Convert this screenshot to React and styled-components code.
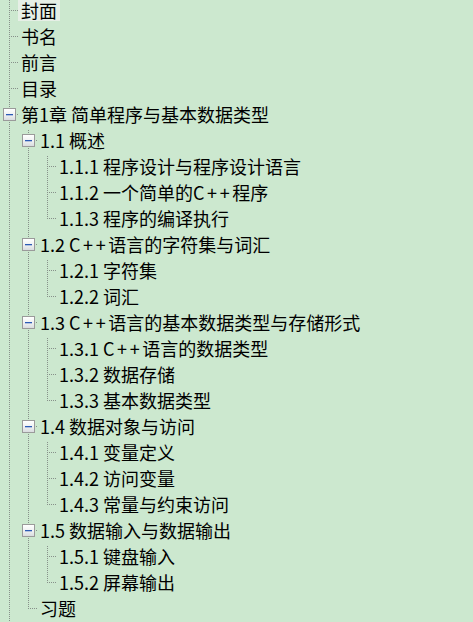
import React from "react";
import styled, { createGlobalStyle, css } from "styled-components";

const GlobalStyle = createGlobalStyle`
  html, body {
    margin: 0;
    padding: 0;
    background: #cce8cf;
    overflow: hidden;
  }
  body {
    font-family: "Noto Sans CJK SC", "Noto Sans", sans-serif;
  }
`;

const ROW = 26;
const MID = 10;
const INDENT = 19;
const BASE = 9;

const data = [
  { label: "封面", selected: true },
  { label: "书名" },
  { label: "前言" },
  { label: "目录" },
  {
    label: "第1章 简单程序与基本数据类型",
    children: [
      {
        label: "1.1 概述",
        children: [
          { label: "1.1.1 程序设计与程序设计语言" },
          { label: "1.1.2 一个简单的C++程序" },
          { label: "1.1.3 程序的编译执行" },
        ],
      },
      {
        label: "1.2 C++语言的字符集与词汇",
        children: [{ label: "1.2.1 字符集" }, { label: "1.2.2 词汇" }],
      },
      {
        label: "1.3 C++语言的基本数据类型与存储形式",
        children: [
          { label: "1.3.1 C++语言的数据类型" },
          { label: "1.3.2 数据存储" },
          { label: "1.3.3 基本数据类型" },
        ],
      },
      {
        label: "1.4 数据对象与访问",
        children: [
          { label: "1.4.1 变量定义" },
          { label: "1.4.2 访问变量" },
          { label: "1.4.3 常量与约束访问" },
        ],
      },
      {
        label: "1.5 数据输入与数据输出",
        children: [{ label: "1.5.1 键盘输入" }, { label: "1.5.2 屏幕输出" }],
      },
      { label: "习题" },
    ],
  },
];

const dotsV = css`
  background: repeating-linear-gradient(to bottom, #87908a 0 1px, transparent 1px 2px);
`;
const dotsH = css`
  background: repeating-linear-gradient(to right, #87908a 0 1px, transparent 1px 2px);
`;

const TreeView = styled.ul`
  list-style: none;
  margin: 0;
  padding: 0;
`;

const Group = styled.ul`
  list-style: none;
  margin: 0;
  padding: 0 0 0 ${INDENT}px;
`;

const Item = styled.li`
  position: relative;

  /* vertical guide line of this sibling list */
  &::before {
    content: "";
    position: absolute;
    left: ${BASE}px;
    top: 0;
    width: 1px;
    ${(p) => (p.$last ? `height: ${MID + 1}px;` : "bottom: 0;")}
    ${dotsV}
  }
`;

const Row = styled.div`
  height: ${ROW}px;
  display: flex;
  align-items: flex-start;
  gap: 2px;
  padding-left: ${BASE - 6}px;
`;

const Gutter = styled.span`
  position: relative;
  flex: 0 0 13px;
  height: 21px;

  /* horizontal connector */
  &::before {
    content: "";
    position: absolute;
    left: 6px;
    right: -2px;
    top: ${MID}px;
    height: 1px;
    ${dotsH}
  }
`;

const Toggle = styled.span`
  position: relative;
  z-index: 1;
  margin-top: 4px;
  width: 11px;
  height: 11px;
  border: 1px solid #9a9a9a;
  background: linear-gradient(to bottom, #ffffff 0%, #eceeef 60%, #d9dcdf 100%);
  display: flex;
  align-items: center;
  justify-content: center;

  &::after {
    content: "";
    width: 7px;
    height: 1px;
    background: #2b5bb5;
    box-shadow: 0 1px 0 rgba(43, 91, 181, 0.3);
  }
`;

const Label = styled.span`
  display: block;
  height: 21px;
  padding: 0 3px;
  font-size: 18px;
  line-height: 21px;
  color: #000;
  white-space: pre;
  background: ${(p) => (p.$selected ? "#e6efe6" : "transparent")};
`;

const Latin = styled.span`
  letter-spacing: 2.6px;
`;

function renderLabel(text) {
  const parts = text.split("C++");
  if (parts.length === 1) return text;
  return parts.flatMap((p, i) =>
    i === 0 ? [p] : [<Latin key={i}>C++</Latin>, p]
  );
}

function Node({ node, last }) {
  const hasChildren = !!node.children;
  return (
    <Item $last={last}>
      <Row>
        <Gutter>{hasChildren && <Toggle />}</Gutter>
        <Label $selected={node.selected}>{renderLabel(node.label)}</Label>
      </Row>
      {hasChildren && (
        <Group>
          {node.children.map((c, i) => (
            <Node key={c.label} node={c} last={i === node.children.length - 1} />
          ))}
        </Group>
      )}
    </Item>
  );
}

export default function App() {
  return (
    <>
      <GlobalStyle />
      <TreeView>
        {data.map((n) => (
          <Node key={n.label} node={n} last={false} />
        ))}
      </TreeView>
    </>
  );
}
